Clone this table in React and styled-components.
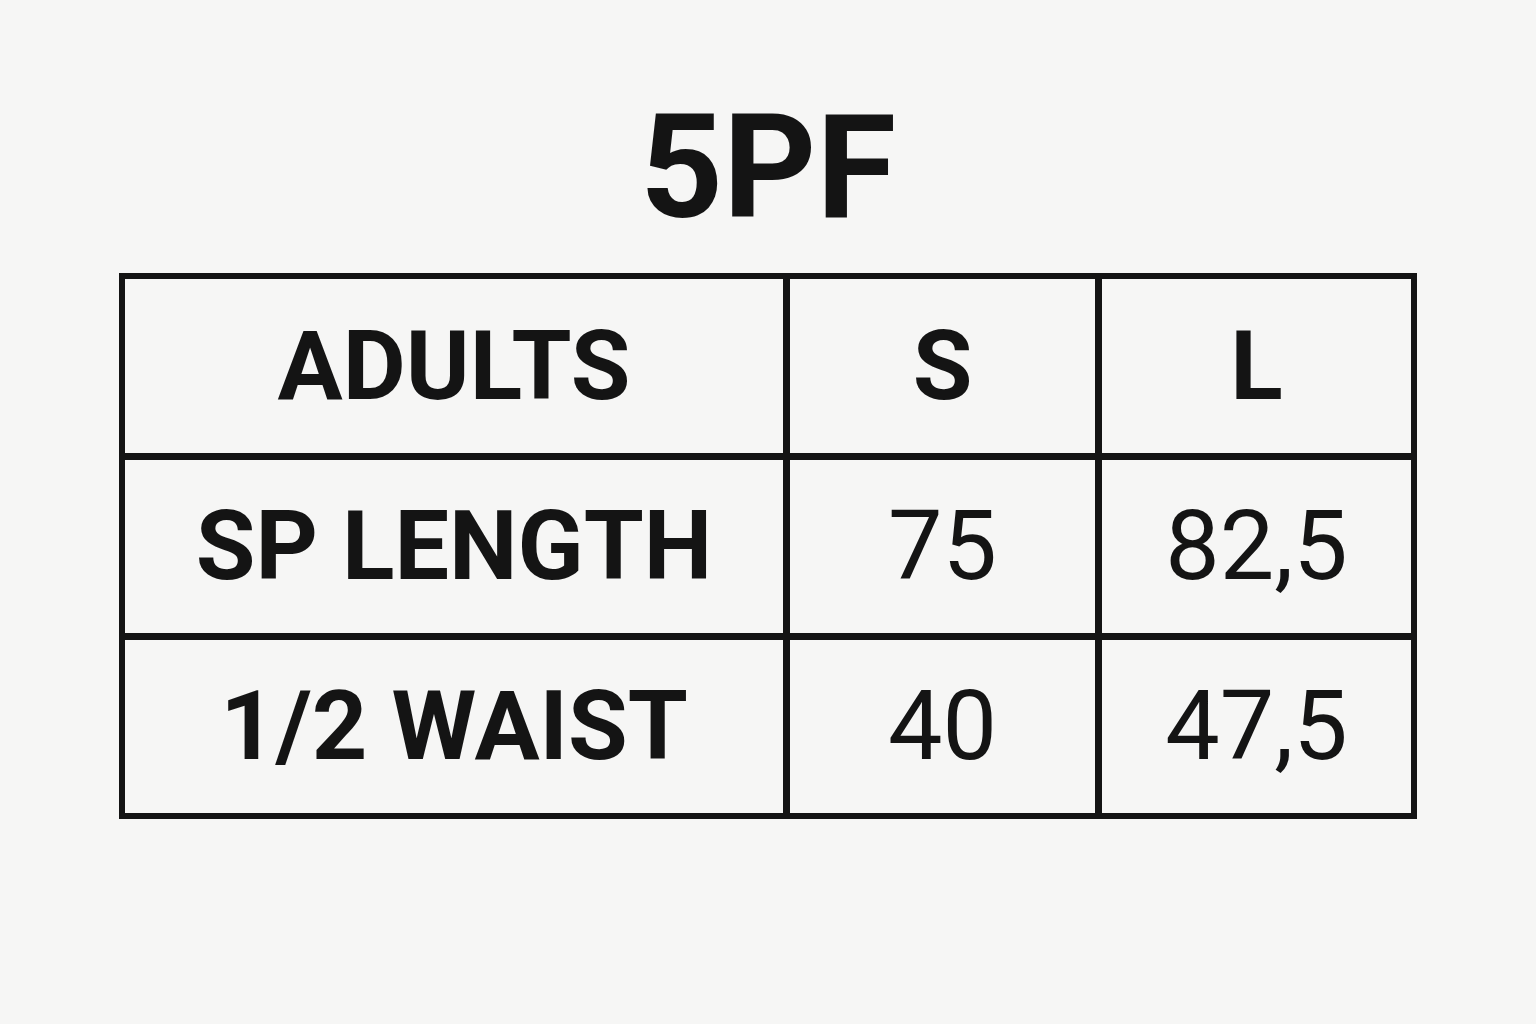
import styled, { createGlobalStyle } from 'styled-components';

const GlobalStyle = createGlobalStyle`
  html, body {
    margin: 0;
    padding: 0;
    background-color: #f6f6f5;
  }
  body {
    font-family: Roboto, 'Liberation Sans', Arial, sans-serif;
    color: #141414;
  }
`;

const Page = styled.main`
  min-height: 1024px;
  display: flex;
  flex-direction: column;
  align-items: center;
  padding-top: 95px;
  box-sizing: border-box;
`;

const Title = styled.h1`
  margin: 0 0 33px;
  font-size: 145px;
  font-weight: 700;
  line-height: 1;
`;

const SizeTable = styled.div`
  display: grid;
  grid-template-columns: 658px 305px 309px;
  grid-template-rows: 174px 173px 173px;
  gap: 7px;
  padding: 6px;
  background-color: #141414;
`;

const Cell = styled.div`
  display: flex;
  align-items: center;
  justify-content: center;
  background-color: #f6f6f5;
  font-size: 97px;
  line-height: 1;
  font-weight: ${(p) => (p.$bold ? 700 : 400)};
`;

const rows = [
  ['ADULTS', 'S', 'L', true],
  ['SP LENGTH', '75', '82,5', false],
  ['1/2 WAIST', '40', '47,5', false],
];

export default function App() {
  return (
    <>
      <GlobalStyle />
      <Page>
        <Title>5PF</Title>
        <SizeTable>
          {rows.map(([label, s, l, head]) => [
            <Cell key={label} $bold>
              {label}
            </Cell>,
            <Cell key={label + 's'} $bold={head}>
              {s}
            </Cell>,
            <Cell key={label + 'l'} $bold={head}>
              {l}
            </Cell>,
          ])}
        </SizeTable>
      </Page>
    </>
  );
}
